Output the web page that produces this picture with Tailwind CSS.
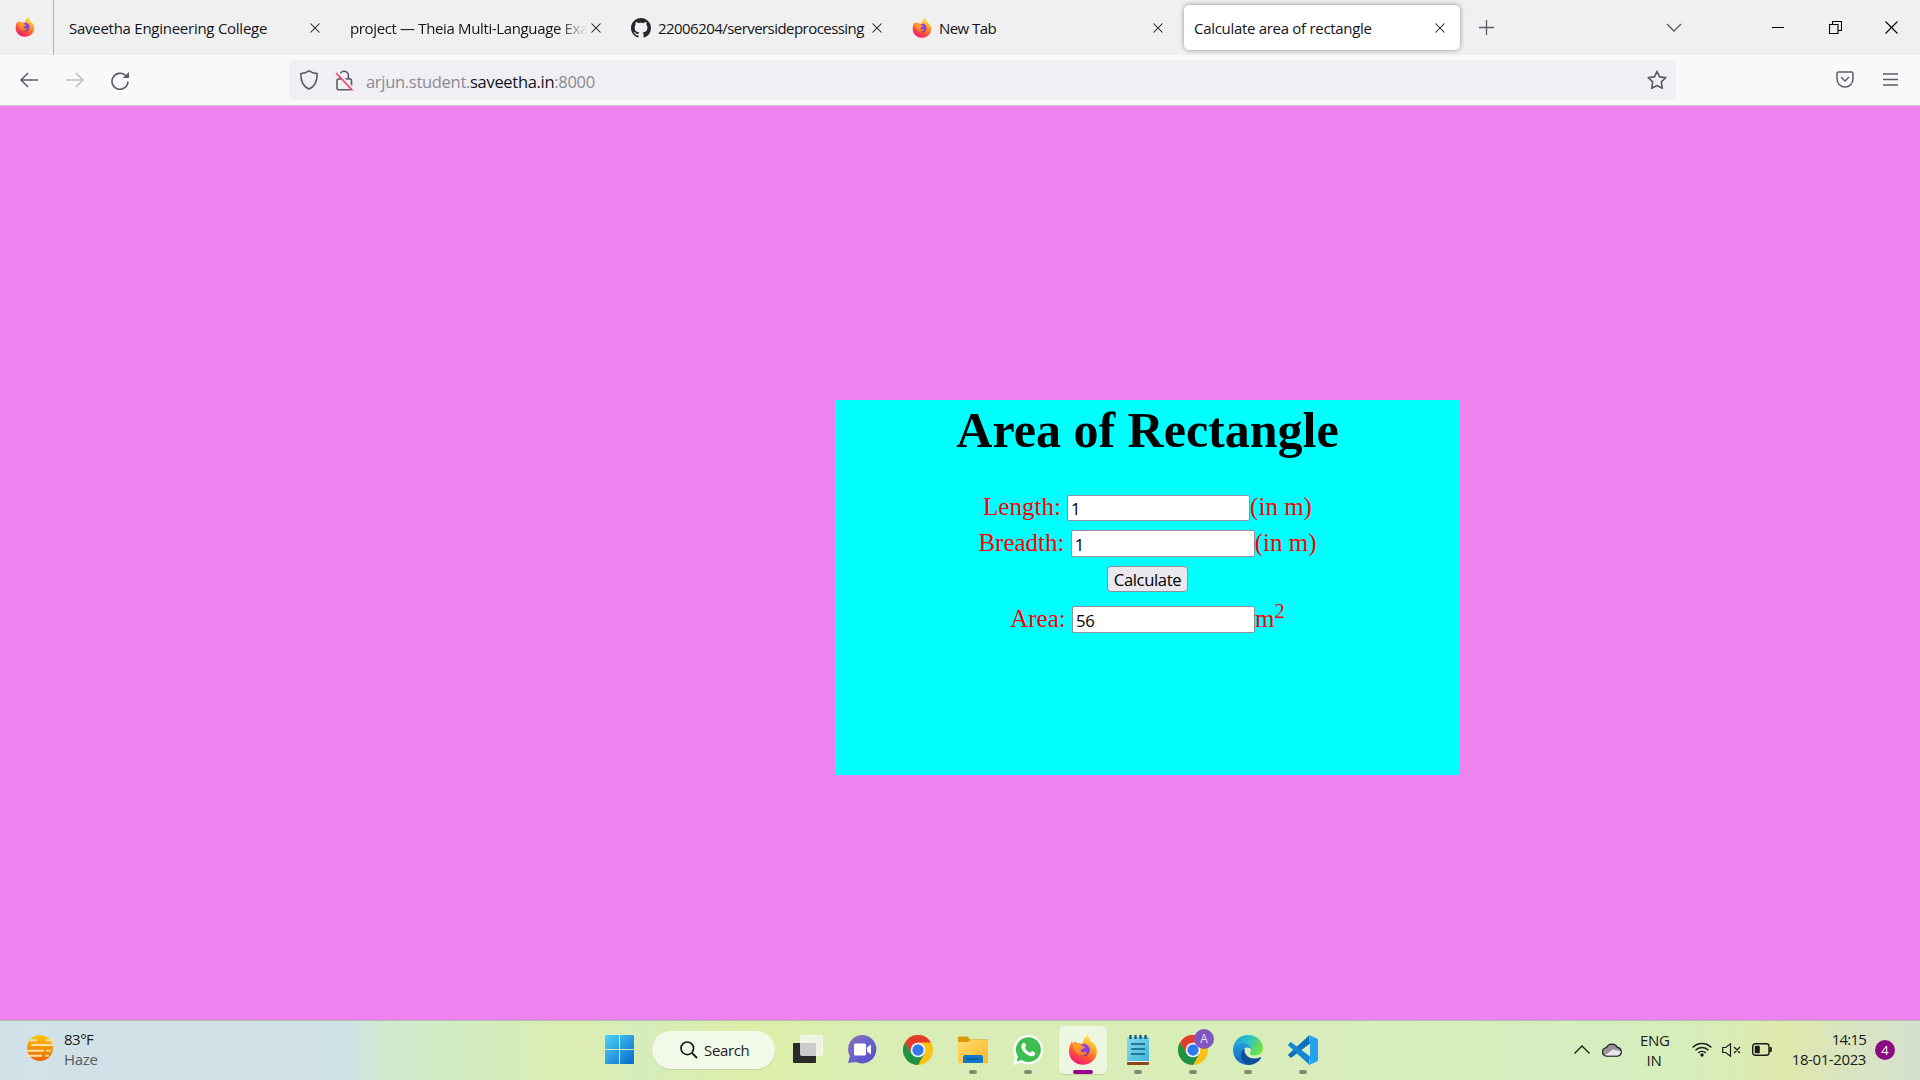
<!DOCTYPE html>
<html lang="en">
<head>
<meta charset="utf-8">
<title>Calculate area of rectangle</title>
<script src="https://cdn.jsdelivr.net/npm/@tailwindcss/browser@4"></script>
</head>
<body class="w-[1920px] h-[1080px] overflow-hidden flex flex-col font-['Open_Sans','Noto_Sans',sans-serif] text-[15px] text-[#15141a]">
<svg class="absolute w-0 h-0" aria-hidden="true">
  <defs>
    <linearGradient id="ffBody" x1="0.8" y1="0" x2="0.3" y2="1"><stop offset="0" stop-color="#fff44f"/><stop offset=".35" stop-color="#ffa72a"/><stop offset=".65" stop-color="#ff5a36"/><stop offset="1" stop-color="#f0157a"/></linearGradient>
    <radialGradient id="ffCore" cx=".5" cy=".3" r=".8"><stop offset="0" stop-color="#a63de8"/><stop offset=".6" stop-color="#7542e5"/><stop offset="1" stop-color="#4a2a9b"/></radialGradient>
    <linearGradient id="ffFox" x1="0" y1="0" x2="1" y2="1"><stop offset="0" stop-color="#ffb42a"/><stop offset="1" stop-color="#ff6a2a"/></linearGradient>
    <linearGradient id="win" x1="0" y1="0" x2="1" y2="1"><stop offset="0" stop-color="#4ed3fb"/><stop offset="1" stop-color="#0669c9"/></linearGradient>
    <linearGradient id="sun" x1="0" y1="0" x2="0" y2="1"><stop offset="0" stop-color="#fcc60b"/><stop offset="1" stop-color="#ec6306"/></linearGradient>
    <linearGradient id="chat" x1="0" y1="0" x2="1" y2="1"><stop offset="0" stop-color="#8f6fae"/><stop offset=".5" stop-color="#6a62d0"/><stop offset="1" stop-color="#4d4fc4"/></linearGradient>
    <linearGradient id="folder" x1="0" y1="0" x2="1" y2="1"><stop offset="0" stop-color="#ffdb6e"/><stop offset="1" stop-color="#fcb72a"/></linearGradient>
    <linearGradient id="note" x1="0" y1="0" x2="1" y2="1"><stop offset="0" stop-color="#86dcef"/><stop offset="1" stop-color="#3fb4d8"/></linearGradient>
    <linearGradient id="edgeTop" x1="0" y1="0" x2="1" y2=".4"><stop offset="0" stop-color="#1c97d9"/><stop offset=".55" stop-color="#2fc2c6"/><stop offset="1" stop-color="#6be04b"/></linearGradient>
    <linearGradient id="edgeMid" x1="0" y1="0" x2="0" y2="1"><stop offset="0" stop-color="#1f9fe2"/><stop offset="1" stop-color="#0e67b8"/></linearGradient>
    <symbol id="firefox" viewBox="0 0 30 30">
      <path d="M19 0c1.500 1.200 3 3.900 3.600 6.200 3.900 2 6.300 5.800 6.300 10.300C28.900 24 22.700 29.700 15 29.700S1 24 1 16.500c0-3.800.9-7.100 3-10.300.2 1 .5 1.700 1 2.400.7-.9 1.600-1.900 2.800-2.600 0 .9.200 1.700.7 2.300 2-.5 4.300-.3 6 .6C14.600 6 17 3 19 0z" fill="url(#ffBody)"/>
      <circle cx="15.500" cy="15" r="6.200" fill="url(#ffCore)"/>
      <path d="M4.500 8.200c1.300 1.100 2.700 1.500 4.400 1.500 1.700-.8 4-.7 5.500.3-.5 1.300 1.300 1.700 2.400 1.900-.3 1.700-2.800 2-4 3-.8 1.100.8 2.800 3.200 2.200 1.600-.5 2.600-.4 3 .3-1 2.700-4.200 4.100-7.100 2.900C7.500 18.500 5 13.500 4.500 8.200z" fill="url(#ffFox)"/>
    </symbol>
    <symbol id="chrome" viewBox="0 0 30 30">
      <circle cx="15" cy="15" r="15" fill="#fbc116"/>
      <path d="M2 7.500A15 15 0 0 1 28 7.500H15L8.500 18.800z" fill="#e33b2e"/>
      <path d="M2 7.500A15 15 0 0 0 15 30l6.500-11.300L15 15l-6.500 3.800z" fill="#1f9246"/>
      <circle cx="15" cy="15" r="7.300" fill="#fff"/><circle cx="15" cy="15" r="5.700" fill="#2f7bed"/>
    </symbol>
    <symbol id="close" viewBox="0 0 10 10"><path d="M.5.500l9 9M9.500.500l-9 9" stroke="currentColor" stroke-width="1.050" fill="none"/></symbol>
  </defs>
</svg>

<!-- Tab strip -->
<div class="h-[55px] shrink-0 bg-[#f0f0f0] flex items-center">
  <div class="w-[54px] h-full border-r border-[#b4b4b4] flex items-center justify-end pr-[18px] pb-[1px] shrink-0"><svg class="w-5 h-5"><use href="#firefox"/></svg></div>
  <div class="w-[284px] shrink-0 flex items-center justify-between pl-[15px] pr-[18px]">
    <span class="whitespace-nowrap tracking-[-0.26px] pt-[1px]">Saveetha Engineering College</span>
    <svg class="w-[10px] h-[10px]"><use href="#close"/></svg>
  </div>
  <div class="w-[281px] shrink-0 flex items-center justify-between pl-[12px] pr-[18px]">
    <span class="w-[240px] whitespace-nowrap tracking-[-0.36px] pt-[1px] [mask-image:linear-gradient(to_right,black_87%,transparent_99%)]">project — Theia Multi-Language Exa</span>
    <svg class="w-[10px] h-[10px] shrink-0"><use href="#close"/></svg>
  </div>
  <div class="w-[281px] shrink-0 flex items-center pl-[12px] pr-[18px]">
    <svg class="w-5 h-5 mr-[7px]" viewBox="0 0 16 16"><path fill="#24292f" d="M8 0C3.580 0 0 3.580 0 8c0 3.540 2.290 6.530 5.470 7.590.4.070.55-.17.55-.38 0-.19-.01-.82-.01-1.490-2.010.37-2.530-.49-2.690-.94-.09-.23-.48-.94-.82-1.130-.28-.15-.68-.52-.01-.53.63-.01 1.080.58 1.230.82.720 1.210 1.870.87 2.330.66.070-.52.280-.87.510-1.070-1.780-.2-3.640-.89-3.640-3.950 0-.87.310-1.590.82-2.150-.08-.2-.36-1.020.08-2.120 0 0 .67-.21 2.200.82.640-.18 1.320-.27 2-.27s1.360.090 2 .27c1.530-1.040 2.200-.82 2.200-.82.440 1.100.160 1.920.080 2.120.51.560.82 1.270.82 2.150 0 3.070-1.870 3.750-3.650 3.950.29.250.54.730.54 1.480 0 1.070-.01 1.930-.01 2.200 0 .21.150.46.550.38A8.010 8.010 0 0 0 16 8c0-4.420-3.580-8-8-8z"/></svg>
    <span class="flex-1 whitespace-nowrap tracking-[-0.55px] pt-[1px]">22006204/serversideprocessing</span>
    <svg class="w-[10px] h-[10px] shrink-0"><use href="#close"/></svg>
  </div>
  <div class="w-[281px] shrink-0 flex items-center pl-[12px] pr-[18px]">
    <svg class="w-5 h-5 mr-[7px]"><use href="#firefox"/></svg>
    <span class="flex-1 whitespace-nowrap tracking-[-0.55px] pt-[1px]">New Tab</span>
    <svg class="w-[10px] h-[10px]"><use href="#close"/></svg>
  </div>
  <div class="ml-[3px] w-[276px] h-[45px] shrink-0 flex items-center justify-between pl-[10px] pr-[15px] bg-white rounded-[5px] shadow-[0_0_5px_rgba(0,0,0,0.4)]">
    <span class="whitespace-nowrap tracking-[-0.3px] pt-[1px]">Calculate area of rectangle</span>
    <svg class="w-[10px] h-[10px]"><use href="#close"/></svg>
  </div>
  <svg class="ml-[19px] w-[15px] h-[15px] shrink-0" viewBox="0 0 15 15"><path d="M7.500 0v15M0 7.500h15" stroke="#5b5b66" stroke-width="1.300"/></svg>
  <svg class="ml-[172px] w-4 h-[10px] shrink-0" viewBox="0 0 16 10"><path d="M1 1l7 7 7-7" stroke="#5b5b66" stroke-width="1.400" fill="none"/></svg>
  <svg class="ml-[90px] w-3 h-3 shrink-0" viewBox="0 0 12 12"><path d="M0 5.500h12" stroke="#000"/></svg>
  <svg class="ml-[45px] w-[13px] h-[13px] shrink-0" viewBox="0 0 13 13"><path d="M.5 3.500h8.500v9H.5zM3.500 3.500v-3h9v9H9" stroke="#000" stroke-width="1.100" fill="none"/></svg>
  <svg class="ml-[43px] w-[13px] h-[13px] shrink-0" viewBox="0 0 13 13"><path d="M.5.500l12 12M12.500.500l-12 12" stroke="#000" stroke-width="1.100"/></svg>
</div>

<!-- Navigation toolbar -->
<div class="h-[51px] shrink-0 bg-[#f9f9fb] border-b border-[#cccccc] flex items-center text-[#5b5b66]">
  <svg class="ml-[20px] w-[18px] h-4" viewBox="0 0 18 16"><path d="M18 8H1M8 1L1 8l7 7" stroke="currentColor" stroke-width="1.500" fill="none"/></svg>
  <svg class="ml-[28px] w-[18px] h-4 text-[#bdbdc3]" viewBox="0 0 18 16"><path d="M0 8h17M10 1l7 7-7 7" stroke="currentColor" stroke-width="1.500" fill="none"/></svg>
  <svg class="ml-[27px] w-[18px] h-[18px] mt-[2px]" viewBox="0 0 18 18"><path d="M14.500 3.500A8 8 0 1 0 17 9.500" stroke="currentColor" stroke-width="1.600" fill="none"/><path d="M18 0v5.500a.6.600 0 0 1-.6.600H11.800z" fill="currentColor"/></svg>
  <div class="ml-[160px] w-[1387px] h-10 rounded-[5px] bg-[#f0f0f4] flex items-center pl-[11px] pr-[9px]">
    <svg class="w-[18px] h-5" viewBox="0 0 18 20"><path d="M9 .9c2.500 1.700 5.200 2.500 8.100 2.700.2 7.500-1.800 12.800-8.100 15.500C2.700 16.400.7 11.100.9 3.600 3.800 3.400 6.500 2.600 9 .9z" stroke="currentColor" stroke-width="1.600" fill="none" stroke-linejoin="round"/></svg>
    <svg class="ml-[17px] w-[18px] h-[21px]" viewBox="0 0 18 21"><rect x="2" y="9" width="14.500" height="10.800" rx="1.500" stroke="currentColor" stroke-width="1.600" fill="none"/><path d="M5 9V5.500a4.200 4.200 0 0 1 8.400 0V9" stroke="currentColor" stroke-width="1.600" fill="none"/><path d="M2.500 2L18 18.500" stroke="#f0f0f4" stroke-width="2"/><path d="M1 3l16.500 17.500" stroke="#ff4068" stroke-width="1.600"/></svg>
    <span class="ml-[13px] flex-1 text-[16.500px] tracking-[-0.3px] text-[#8a8a92] pt-[4px]">arjun.student.<span class="text-[#15141a]">saveetha.in</span>:8000</span>
    <svg class="w-5 h-5" viewBox="0 0 20 20"><path d="M10 1.200l2.500 5.700 6.300.7-4.500 4.200 1 6.500L10 15.500l-5.300 2.800 1-6.500L1.200 7.600l6.300-.7z" stroke="currentColor" stroke-width="1.600" fill="none" stroke-linejoin="round"/></svg>
  </div>
  <svg class="ml-[160px] w-[18px] h-[17px] -mt-px" viewBox="0 0 18 17"><path d="M2.500 1h13A1.500 1.500 0 0 1 17 2.500V8a8 8 0 0 1-16 0V2.500A1.500 1.500 0 0 1 2.500 1z" stroke="currentColor" stroke-width="1.500" fill="none"/><path d="M5 6l4 4 4-4" stroke="currentColor" stroke-width="1.500" fill="none"/></svg>
  <svg class="ml-[29px] w-[15px] h-[13px] -mt-px" viewBox="0 0 15 13"><path d="M0 1h15M0 6.500h15M0 12h15" stroke="currentColor" stroke-width="1.400"/></svg>
</div>

<!-- Page -->
<main class="h-[914px] shrink-0 bg-[#ee82ee] pt-[294px] pl-[835px]">
  <form class="w-[625px] h-[375px] bg-[#00ffff] flex flex-col items-center text-[25px] leading-[28px] text-[#ff0000] font-['Liberation_Serif',serif]">
    <h1 class="text-[50px] leading-[57px] font-bold text-black mt-[2px]">Area of Rectangle</h1>
    <div class="mt-[34px] h-[28px] flex whitespace-pre"><label>Length: </label><input value="1" class="mt-[2px] w-[183px] h-[26px] bg-white border border-[#8f8f9d] rounded-[2px] px-[3px] pt-[2px] text-[16.670px] text-black font-['Open_Sans','Noto_Sans',sans-serif]"><span>(in m)</span></div>
    <div class="mt-[8px] h-[28px] flex whitespace-pre"><label>Breadth: </label><input value="1" class="mt-[1px] w-[184px] h-[27px] bg-white border border-[#8f8f9d] rounded-[2px] px-[3px] pt-[2px] text-[16.670px] text-black font-['Open_Sans','Noto_Sans',sans-serif]"><span>(in m)</span></div>
    <button type="button" class="mt-[9px] w-[81px] h-[26px] bg-[#e9e9ed] border border-[#8f8f9d] rounded-[4px] text-[16.670px] leading-[22px] pt-[2px] tracking-[-0.4px] text-black font-['Open_Sans','Noto_Sans',sans-serif]">Calculate</button>
    <div class="mt-[13px] h-[28px] flex whitespace-pre"><label>Area: </label><input value="56" class="mt-[1px] w-[183px] h-[27px] bg-white border border-[#8f8f9d] rounded-[2px] px-[3px] pt-[2px] text-[16.670px] tracking-[-0.3px] text-black font-['Open_Sans','Noto_Sans',sans-serif]"><span>m</span><span class="text-[20.800px] -mt-[8px]">2</span></div>
  </form>
</main>

<!-- Taskbar -->
<footer class="h-[60px] shrink-0 border-t border-[#a9bda8] bg-[linear-gradient(90deg,#d0e2e8_0px,#d3e0e8_170px,#cfe2e8_340px,#d0ebcf_390px,#d3edc0_470px,#dcedb0_570px,#d6edbc_640px,#deeea8_750px,#d9edb6_900px,#d9edba_1250px,#d5eec0_1600px,#d8edb8_1720px,#dfe9ac_1780px,#d9e4c0_1850px,#d5e1cf_1920px)] text-[#1b1b1b]">
  <div class="flex items-center h-full pb-[2px]">
    <div class="w-[578px] flex items-center pl-[25px]">
      <svg class="w-[30px] h-[26px] -mt-[4px]" viewBox="0 0 30 26"><circle cx="15" cy="13" r="13" fill="url(#sun)"/><path d="M5 5.300h7M21 5.300h9M6 10h23M0 15.700h19M0 20.700h17" stroke="#f6e3a4" stroke-width="2" /><path d="M21 15.700h5M20 20.700h4" stroke="#f9cf7c" stroke-width="2"/></svg>
      <div class="ml-[9px] leading-[20px] -mt-[1px]"><div class="tracking-[-0.5px]">83°F</div><div class="tracking-[-0.300px] text-[#545c61]">Haze</div></div>
    </div>
    <svg class="ml-[27px] w-[29px] h-[29px]" viewBox="0 0 29 29"><path fill="url(#win)" d="M1 0h13v14H0V1a1 1 0 0 1 1-1zM15 0h13a1 1 0 0 1 1 1v13H15zM0 15h14v14H1a1 1 0 0 1-1-1zM15 15h14v13a1 1 0 0 1-1 1H15z"/></svg>
    <div class="ml-[18px] w-[123px] h-[38px] rounded-full bg-[#f3f9e8] shadow-[0_1px_1px_rgba(0,0,0,0.1)] flex items-center pl-[28px]">
      <svg class="w-[18px] h-[18px]" viewBox="0 0 18 18"><circle cx="7.300" cy="7.300" r="6.300" stroke="#1b1b1b" stroke-width="1.700" fill="none"/><path d="M12 12l5 5" stroke="#1b1b1b" stroke-width="1.900"/></svg>
      <span class="ml-[6px] tracking-[-0.35px] pt-[1px]">Search</span>
    </div>
    <div class="ml-[5px] flex">
      <div class="w-[55px] h-12 flex items-center justify-center"><svg class="w-[30px] h-[29px]" viewBox="0 0 30 29"><rect y="8" width="23" height="20" rx="1" fill="#2b2b2b"/><rect x="7.500" y=".5" width="22" height="20" rx="1" fill="#f4f4f4" fill-opacity=".8" stroke="#fff" stroke-opacity=".6"/></svg></div>
      <div class="w-[55px] h-12 flex items-center justify-center"><svg class="w-[29px] h-[29px]" viewBox="0 0 29 29"><path d="M14.500 0A14.200 14.200 0 1 1 8 27L0 28l1.800-7A14.200 14.200 0 0 1 14.500 0z" fill="url(#chat)"/><rect x="6" y="8.500" width="12" height="12" rx="1.500" fill="#fff"/><path d="M19 12.500l4-3v10l-4-3z" fill="#fff"/></svg></div>
      <div class="w-[55px] h-12 flex items-center justify-center"><svg class="w-[30px] h-[30px]"><use href="#chrome"/></svg></div>
      <div class="relative w-[55px] h-12 flex items-center justify-center"><svg class="w-[30px] h-[27px]" viewBox="0 0 30 27"><path d="M0 8V1.500A1 1 0 0 1 1 .5h8.500l2.500 3h17.500a.5.500 0 0 1 .5.500v4z" fill="#dd9a07"/><path d="M0 6h10l3-2h17v22a1 1 0 0 1-1 1H1a1 1 0 0 1-1-1z" fill="url(#folder)"/><path d="M5 27v-6a2 2 0 0 1 2-2h16a2 2 0 0 1 2 2v6z" fill="#1078cc"/><path d="M8.500 23h13" stroke="#0a4a86" stroke-width="1.200"/></svg><i class="absolute bottom-0 w-2 h-1 rounded-full bg-[#7f8c70]"></i></div>
      <div class="relative w-[55px] h-12 flex items-center justify-center"><svg class="w-[30px] h-[30px]" viewBox="0 0 30 30"><path d="M15.300 0A14.700 14.700 0 1 1 8 27.400L0 30l2.400-8A14.700 14.700 0 0 1 15.300 0z" fill="#fff"/><path d="M15.300 2.300A12.400 12.400 0 1 1 8.600 25l-5 1.500 1.400-5A12.400 12.400 0 0 1 15.300 2.300z" fill="#3cbe50"/><path d="M10.600 7.800c.8-.3 1.300 0 1.600.8l.9 2.200c.1.700-.9 1.500-1.200 2 1.200 2.400 3 4 5.500 5 .6-.5 1.200-1.800 1.900-1.700l2.600 1.300c.6.400.3 1.700-.1 2.300-1.200 1.600-3.300 1.800-5.300 1.100-4-1.400-6.500-4-7.900-7.300-.8-2.100-.2-4.700 2-5.700z" fill="#fff"/></svg><i class="absolute bottom-0 w-2 h-1 rounded-full bg-[#7f8c70]"></i></div>
      <div class="relative w-[55px] h-12 flex items-center justify-center"><span class="w-12 h-12 rounded-[5px] bg-[#edf6de] shadow-[0_1px_1px_rgba(0,0,0,0.12)] flex items-center justify-center"><svg class="w-[30px] h-[30px]"><use href="#firefox"/></svg></span><i class="absolute bottom-0 w-5 h-1 rounded-full bg-[#9a0089]"></i></div>
      <div class="relative w-[55px] h-12 flex items-center justify-center"><svg class="w-[22px] h-[30px]" viewBox="0 0 22 30"><path d="M0 26h22v3a1 1 0 0 1-1 1H1a1 1 0 0 1-1-1z" fill="#8e4a12"/><path d="M0 25h22v2H0z" fill="#f5f5f5"/><path d="M1 2h20a1 1 0 0 1 1 1v23H0V3a1 1 0 0 1 1-1z" fill="url(#note)"/><path d="M4 9h14M4 14h14M4 19h14" stroke="#115e78" stroke-width="1.700"/><path d="M3.500 0v4M8.500 0v4M13.500 0v4M18.500 0v4" stroke="#14566e" stroke-width="2.300"/></svg><i class="absolute bottom-0 w-2 h-1 rounded-full bg-[#7f8c70]"></i></div>
      <div class="relative w-[55px] h-12 flex items-center justify-center"><svg class="w-[30px] h-[30px]"><use href="#chrome"/></svg><span class="absolute left-[29px] top-[3px] w-5 h-5 rounded-full bg-[#8055bd] text-[#e9dcf7] text-[12px] leading-[20px] text-center">A</span><i class="absolute bottom-0 w-2 h-1 rounded-full bg-[#7f8c70]"></i></div>
      <div class="relative w-[55px] h-12 flex items-center justify-center"><svg class="w-[30px] h-[30px]" viewBox="0 0 30 30"><path d="M0 14C.6 6 6.800 0 15 0c9 0 15 6.300 15 12.800 0 5-4 7.700-8.400 7.700-3.200 0-4.800-1-4.800-2.100 0-.8 1.300-1.300 1.300-3.600C18.100 11 14.500 8 10 8 5.500 8 1.800 10 0 14z" fill="url(#edgeTop)"/><path d="M0 14.500C1 10 5 7.800 9.800 7.800c4.600 0 8.300 3 8.300 6.900-.6-1.300-2-2.200-3.600-2.200-3 0-5.200 2.700-5.200 6.300 0 5 3.500 9.400 8.700 11C8 31.200 0 24.500 0 14.500z" fill="url(#edgeMid)"/><path d="M10.300 14.500c-3.200 3.200-3.700 9.500 1.200 13.200 2 1.500 4.300 2.300 6.500 2.100 4.200-.6 7.700-3 9.900-6.500.5-.9-.1-1.400-.9-1-5 2.300-11.500 1.600-14.500-3.200-1-1.500-1.200-3.300-.5-5z" fill="#0d4f98"/></svg><i class="absolute bottom-0 w-2 h-1 rounded-full bg-[#7f8c70]"></i></div>
      <div class="relative w-[55px] h-12 flex items-center justify-center"><svg class="w-[30px] h-[30px]" viewBox="0 0 30 30"><path d="M22 8.500L3.600 22.500a1 1 0 0 1-1.300 0L.5 20.800a1 1 0 0 1 0-1.500L21 .6z" fill="#0b6fbd"/><path d="M22 21.500L3.600 7.500a1 1 0 0 0-1.300 0L.5 9.200a1 1 0 0 0 0 1.500L21 29.400z" fill="#1387d4"/><path d="M21.500.2L29 3.500a1.600 1.600 0 0 1 1 1.400v20.200a1.600 1.600 0 0 1-1 1.400l-7.500 3.300c-.7.300-.9-.1-.7-.8L22 27V3L20.800 1c-.2-.6 0-1 .7-.8z" fill="#26a3f0"/></svg><i class="absolute bottom-0 w-2 h-1 rounded-full bg-[#7f8c70]"></i></div>
    </div>
    <svg class="ml-[244px] w-4 h-[9px]" viewBox="0 0 16 9"><path d="M.5 8.500L8 1l7.500 7.500" stroke="#1b1b1b" stroke-width="1.300" fill="none"/></svg>
    <svg class="ml-[12px] w-5 h-[15px]" viewBox="0 0 20 15"><path d="M5 14.200A4.300 4.300 0 0 1 4.500 5.600 6 6 0 0 1 15.300 5.300 4.500 4.500 0 0 1 15.500 14.200z" fill="#969696" stroke="#222" stroke-width="1.300"/><path d="M3 13l8-5.500 7.500 1.800c.3 2-1 4.200-3 4.200H5z" fill="#e8e8ee"/></svg>
    <div class="ml-[18px] w-[28px] whitespace-nowrap leading-[20px] text-center tracking-[-0.3px]">ENG<br>IN</div>
    <svg class="ml-[24px] w-[20px] h-[15px]" viewBox="0 0 20 15"><g fill="none" stroke="#1b1b1b" stroke-width="1.400"><path d="M.6 5.500a13 13 0 0 1 18.800 0M3.500 8.300a9 9 0 0 1 13 0M6.200 11a5.300 5.300 0 0 1 7.600 0"/></g><circle cx="10" cy="13" r="1.700" fill="#1b1b1b"/></svg>
    <svg class="ml-[10px] w-[19px] h-[14px]" viewBox="0 0 19 14"><path d="M.7 4.500h3L8.500.8v12.400L3.700 9.500h-3zM12 4l6 6M18 4l-6 6" fill="none" stroke="#1b1b1b" stroke-width="1.200"/></svg>
    <svg class="ml-[11px] w-[20px] h-[13px]" viewBox="0 0 20 13"><rect x=".7" y=".7" width="16.300" height="11.600" rx="2.500" fill="none" stroke="#1b1b1b" stroke-width="1.400"/><rect x="2.800" y="2.800" width="5" height="7.400" rx=".8" fill="#1b1b1b"/><path d="M17.500 4h1.300a1 1 0 0 1 1 1v3a1 1 0 0 1-1 1h-1.300z" fill="#1b1b1b"/></svg>
    <div class="ml-[20px] w-[74px] flex flex-col items-end whitespace-nowrap leading-[20px] -mt-[2px] tracking-[-0.4px]"><span class="tracking-[-0.8px]">14:15</span><span>18-01-2023</span></div>
    <span class="ml-[9px] w-5 h-5 rounded-full bg-[#8b0a80] text-white text-[13px] leading-[20px] text-center">4</span>
  </div>
</footer>
</body>
</html>
